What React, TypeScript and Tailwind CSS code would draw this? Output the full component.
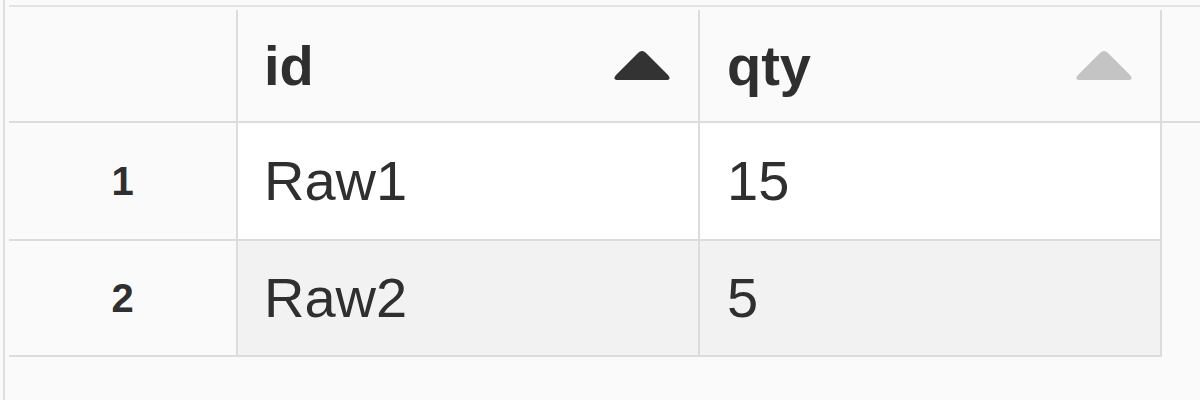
import React from 'react';

const rows = [
    { n: 1, id: 'Raw1', qty: '15' },
    { n: 2, id: 'Raw2', qty: '5' },
];

const SortArrow = ({ active }: { active: boolean }) => (
    <svg width="60" height="32" viewBox="0 0 60 32" className={active ? 'text-[#333333]' : 'text-[#c4c4c4]'}>
        <path
            d="M26 3 Q30 -1 34 3 L56 25 Q60 30 54 30 L6 30 Q0 30 4 25 Z"
            fill="currentColor"
        />
    </svg>
);

export default function App() {
    return (
        <div className="w-[1200px] h-[400px] bg-[#fafafa] overflow-hidden pl-[3px] font-['Liberation_Sans',Arial,sans-serif] text-[#2f2f2f]">
            <div className="h-full border-l-2 border-[#dedede] pl-1 pt-[5px]">
                <div className="border-t-2 border-[#e3e3e3]">
                    {/* header */}
                    <div className="flex h-[116px] pt-[3px] border-b-2 border-[#dcdcdc]">
                        <div className="w-[229px] shrink-0 border-r-2 border-[#dcdcdc]" />
                        <div className="w-[462px] shrink-0 border-r-2 border-[#dcdcdc] flex items-center justify-between pl-[26px] pr-[26px]">
                            <span className="text-[56px] font-bold leading-none">id</span>
                            <SortArrow active />
                        </div>
                        <div className="w-[462px] shrink-0 border-r-2 border-[#dcdcdc] flex items-center justify-between pl-[27px] pr-[26px]">
                            <span className="text-[56px] font-bold leading-none">qty</span>
                            <SortArrow active={false} />
                        </div>
                        <div className="flex-1" />
                    </div>

                    {/* body */}
                    {rows.map((r, i) => (
                        <div key={r.n} className={`flex w-[1153px] border-b-2 border-[#dcdcdc] ${i === 0 ? 'h-[118px]' : 'h-[116px]'}`}>
                            <div className="w-[229px] shrink-0 border-r-2 border-[#dcdcdc] flex items-center justify-center">
                                <span className="text-[40px] font-bold leading-none">{r.n}</span>
                            </div>
                            <div className={`w-[462px] shrink-0 border-r-2 border-[#dcdcdc] flex items-center pl-[26px] ${i === 0 ? 'bg-white' : 'bg-[#f2f2f2]'}`}>
                                <span className="text-[56px] leading-none">{r.id}</span>
                            </div>
                            <div className={`w-[462px] shrink-0 border-r-2 border-[#dcdcdc] flex items-center pl-[27px] ${i === 0 ? 'bg-white' : 'bg-[#f2f2f2]'}`}>
                                <span className="text-[56px] leading-none">{r.qty}</span>
                            </div>
                        </div>
                    ))}
                </div>
            </div>
        </div>
    );
}
